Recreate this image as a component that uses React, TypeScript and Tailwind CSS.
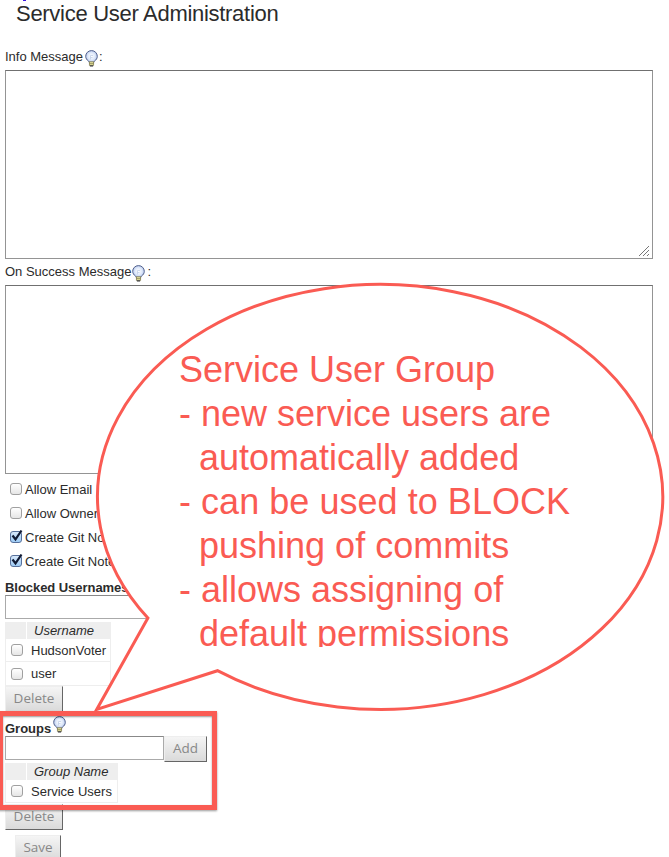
import React from "react";

function Bulb({ className = "" }: { className?: string }) {
  return (
    <svg width="13" height="17" viewBox="0 0 13 17" className={"shrink-0 " + className}>
      <defs>
        <radialGradient id="glass" cx="50%" cy="48%" r="60%">
          <stop offset="0" stopColor="#ffffff" />
          <stop offset="0.5" stopColor="#dfe9fa" />
          <stop offset="1" stopColor="#a3b8e6" />
        </radialGradient>
      </defs>
      <path d="M6.500 .6C3.200.6.7 3.200.7 6.300c0 2.200 1.300 3.600 2.400 4.500.7.6 1.100 1 1.100 1.600h4.600c0-.6.400-1 1.100-1.600 1.100-.9 2.400-2.300 2.400-4.500C12.300 3.200 9.800.6 6.500.6z" fill="url(#glass)" stroke="#53628c" strokeWidth="1" />
      <path d="M5.500 9.500V5.500h2.500M5.500 7.500h2" fill="none" stroke="#c3d0e8" strokeWidth=".8" />
      <rect x="4.300" y="11.800" width="4.400" height="3.400" fill="#e6e39a" stroke="#77734a" strokeWidth=".7" />
      <path d="M4.300 13.500h4.400" stroke="#77734a" strokeWidth=".6" />
      <path d="M4.900 15.900h3.200" stroke="#333" strokeWidth="1.200" />
    </svg>
  );
}

function Check({ checked = false }: { checked?: boolean }) {
  return (
    <span className={checked
      ? "relative block h-3 w-3 shrink-0 rounded-[3px] border border-[#57719c] bg-linear-to-b from-[#d7e8fa] to-[#9dcbf5]"
      : "relative block h-3 w-3 shrink-0 rounded-[3px] border border-[#a0a0a0] bg-linear-to-b from-white to-[#e6e6e6]"}>
      {checked && (
        <svg className="absolute -top-[3px] -left-px" width="14" height="14" viewBox="0 0 14 14">
          <path d="M2.500 6.500l3 3.800L11.500 1.500" fill="none" stroke="#101a33" strokeWidth="2.200" />
        </svg>
      )}
    </span>
  );
}

function Button({ label, className }: { label: string; className: string }) {
  return (
    <button className={"flex h-[26px] shrink-0 items-center justify-center border border-t-[#eee] border-l-[#eee] border-r-[#666] border-b-[#666] bg-linear-to-b from-[#f5f5f5] to-[#dadada] font-['Open_Sans',sans-serif] text-[13.5px] leading-none font-medium text-[#888] " + className}>
      {label}
    </button>
  );
}

function TextArea() {
  return (
    <div className="flex h-[189px] w-[648px] items-end justify-end border border-[#949494] border-t-[#707070] p-px">
      <svg width="13" height="12" viewBox="0 0 13 12" stroke="#777" strokeWidth="1" fill="none">
        <path d="M1 11L11 1M5 11l6-6M9 11l2-2" />
      </svg>
    </div>
  );
}

function Table({ title, rows, className }: { title: string; rows: string[]; className: string }) {
  return (
    <div className={className}>
      <div className="flex h-[17px] gap-px italic">
        <span className="w-[21px] bg-[#eee]" />
        <span className="flex flex-1 items-center bg-[#eee] pl-[7px]">{title}</span>
      </div>
      {rows.map((r) => (
        <div key={r} className="flex h-[23px] items-center gap-[8px] border-r border-b border-l border-[#eee] pl-[5px] nth-[3]:h-6">
          <Check />
          <span>{r}</span>
        </div>
      ))}
    </div>
  );
}

const options = [
  { text: "Allow Email", on: false },
  { text: "Allow Owner", on: false },
  { text: "Create Git Notes", on: true },
  { text: "Create Git Notes", on: true },
];

const callout = [
  { text: "Service User Group", style: "pl-0" },
  { text: "- new service users are", style: "pl-0" },
  { text: "automatically added", style: "pl-5" },
  { text: "- can be used to BLOCK", style: "pl-0 tracking-[0.04px]" },
  { text: "pushing of commits", style: "pl-5" },
  { text: "- allows assigning of", style: "pl-0" },
  { text: "default permissions", style: "pl-5" },
];

export default function App() {
  return (
    <div className="relative h-[857px] w-[669px] overflow-hidden bg-white pl-[5px] font-['Liberation_Sans',Arial,sans-serif] text-[13px] leading-none whitespace-nowrap text-[#2b2b2b]">
      <span className="absolute top-0 left-[23px] h-px w-[3px] bg-[#3a16e0]" />
      <h1 className="h-[46px] pt-[3px] pl-[11px] text-[22px] leading-[22px] tracking-[-0.29px]">Service User Administration</h1>

      <div className="flex h-6 items-center">
        <span className="-mt-[3px]">Info Message</span>
        <Bulb className="ml-0.5" />
        <span className="-mt-[3px] ml-px">:</span>
      </div>
      <TextArea />
      <div className="flex h-[26px] items-center">
        <span className="-mt-px">On Success Message</span>
        <Bulb className="mt-0.5 ml-px" />
        <span className="-mt-px ml-[2px]">:</span>
      </div>
      <TextArea />

      <div className="pt-[3px]">
        {options.map((o, i) => (
          <div key={i} className="flex h-6 items-center gap-[3px] pl-[5px]">
            <Check checked={o.on} />
            <span>{o.text}</span>
          </div>
        ))}
      </div>

      <div className="h-[22px] pt-2 font-bold tracking-[-0.05px]">Blocked Usernames</div>
      <div className="flex h-[27px] items-start">
        <div className="h-6 w-[159px] border border-[#aaa] border-t-[#888]" />
      </div>
      <Table title="Username" rows={["HudsonVoter", "user"]} className="w-[106px]" />
      <Button label="Delete" className="w-[58px]" />

      <div className="flex h-[24px] items-center font-bold">
        <span className="mt-[9px]">Groups</span>
        <Bulb className="ml-[2px]" />
      </div>
      <div className="flex h-[27px] items-start">
        <div className="h-6 w-[159px] border border-[#aaa] border-t-[#888]" />
        <Button label="Add" className="w-[43px]" />
      </div>
      <Table title="Group Name" rows={["Service Users"]} className="w-[113px]" />
      <Button label="Delete" className="mt-px w-[58px]" />
      <Button label="Save" className="mt-[5px] ml-[10px] w-[46px]" />

      <svg className="absolute top-0 left-0" width="669" height="857" viewBox="0 0 669 857">
        <path d="M147.900 618L96.700 709.500L217.500 670.700A282.600 212.500 0 1 0 147.900 618Z" fill="#fff" stroke="#fa5b53" strokeWidth="3" />
      </svg>
      <div className="absolute top-[348px] left-[179px] h-[299px] overflow-hidden text-[36px] leading-[44px] text-[#fa5b53]">
        {callout.map((line) => (
          <div key={line.text} className={line.style}>{line.text}</div>
        ))}
      </div>
      <div className="absolute top-[711px] -left-[2px] h-[99px] w-[219px] border-[5px] border-[#fa5b53] shadow-[0_1px_2px_rgba(0,0,0,0.4),inset_0_1px_2px_rgba(0,0,0,0.4)]" />
    </div>
  );
}
